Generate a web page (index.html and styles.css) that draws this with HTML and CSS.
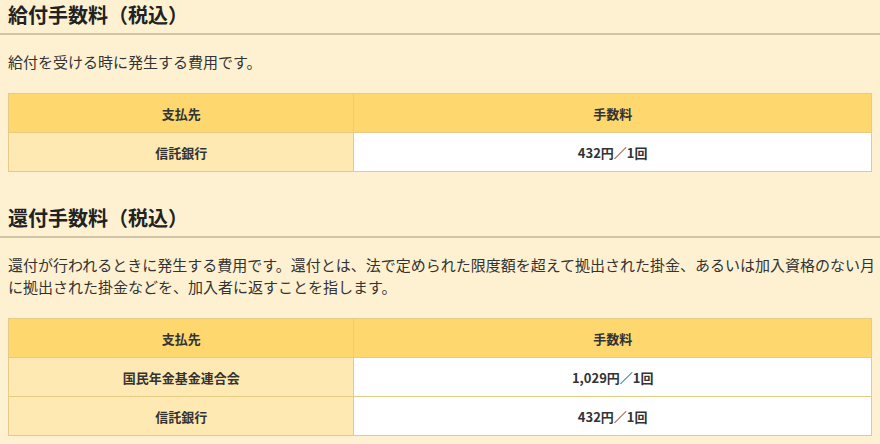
FILE: index.html
```html
<!DOCTYPE html>
<html lang="ja">
<head>
<meta charset="utf-8">
<link rel="stylesheet" href="styles.css">
</head>
<body>
<section class="sec">
  <h2 class="sec-title">給付手数料（税込）</h2>
  <p class="sec-text">給付を受ける時に発生する費用です。</p>
  <table class="fee">
    <thead>
      <tr><th class="col-a">支払先</th><th class="col-b">手数料</th></tr>
    </thead>
    <tbody>
      <tr><th class="row-h">信託銀行</th><td>432円／1回</td></tr>
    </tbody>
  </table>
</section>
<section class="sec sec-2">
  <h2 class="sec-title">還付手数料（税込）</h2>
  <p class="sec-text">還付が行われるときに発生する費用です。還付とは、法で定められた限度額を超えて拠出された掛金、あるいは加入資格のない月に拠出された掛金などを、加入者に返すことを指します。</p>
  <table class="fee">
    <thead>
      <tr><th class="col-a">支払先</th><th class="col-b">手数料</th></tr>
    </thead>
    <tbody>
      <tr><th class="row-h">国民年金基金連合会</th><td>1,029円／1回</td></tr>
      <tr><th class="row-h">信託銀行</th><td>432円／1回</td></tr>
    </tbody>
  </table>
</section>
</body>
</html>
```
FILE: styles.css
```css
html, body {
  margin: 0;
  padding: 0;
  background: #fef1d1;
}
body {
  font-family: "Noto Sans CJK JP", "Noto Sans", sans-serif;
  color: #333;
}
.sec-2 {
  margin-top: 31px;
}
.sec-title {
  margin: 0;
  padding: 0 8px 3px;
  font-size: 20px;
  line-height: 30px;
  font-weight: bold;
  color: #222;
  border-bottom: 2px solid #cfc5a6;
}
.sec-text {
  margin: 16px 0 20px 8px;
  font-size: 15px;
  line-height: 22px;
  color: #333;
}
.fee {
  width: 864px;
  margin: 0 8px;
  border-collapse: collapse;
  table-layout: fixed;
  font-size: 13px;
  font-weight: bold;
  color: #333;
}
.fee th, .fee td {
  border: 1px solid #e6cb86;
  text-align: center;
  height: 38px;
  padding: 0;
}
.fee thead th {
  background: #fed76f;
}
.col-a { width: 40%; }
.col-b { width: 60%; }
.fee .row-h {
  background: #ffe9b2;
}
.fee td {
  background: #fff;
}
```
